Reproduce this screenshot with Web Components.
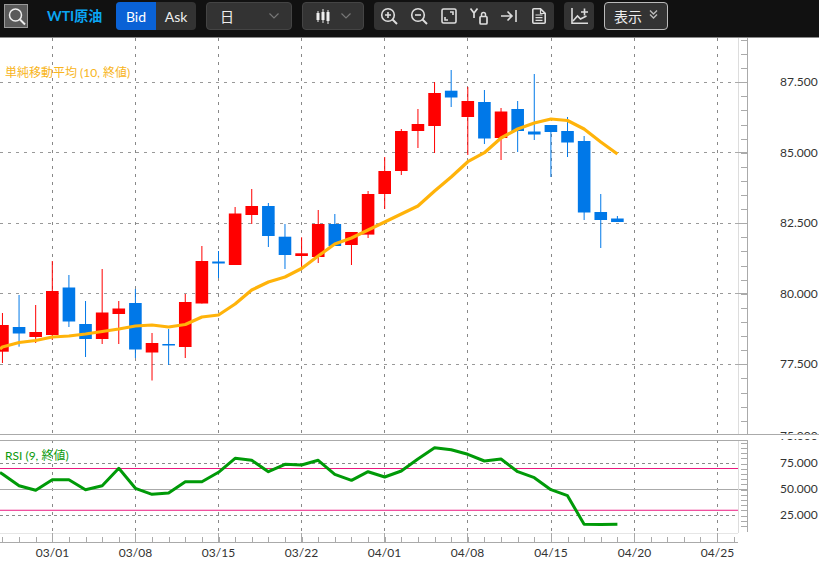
<!DOCTYPE html>
<html><head><meta charset="utf-8">
<style>
html,body{margin:0;padding:0;background:#fff;overflow:hidden}
body{width:819px;height:562px;font-family:Lato,"Noto Sans CJK JP",sans-serif;display:flex;flex-direction:column}
</style></head>
<body>
<chart-toolbar></chart-toolbar>
<chart-canvas></chart-canvas>
<script>
const svgI=(w,h,inner)=>`<svg width="${w}" height="${h}" viewBox="0 0 ${w} ${h}" fill="none" stroke="currentColor" stroke-width="1.6" style="display:block;overflow:visible">${inner}</svg>`;
const ICONS={
 search:svgI(18,18,'<circle cx="8.500" cy="8" r="6" stroke-width="1.500"/><path d="M13 12.500 18 17.500" stroke-width="2"/>'),
 candle:svgI(14,15,'<g stroke-width="1"><path d="M2 2v11M7 0v14M12 1v14"/></g><g fill="currentColor" stroke="none"><rect x=".5" y="4" width="3" height="7"/><rect x="5.500" y="3" width="3" height="8"/><rect x="10.500" y="3" width="3" height="9"/></g>'),
 zoomin:svgI(18,18,'<circle cx="8" cy="8" r="6.300"/><path d="M12.500 12.500 17 17" stroke-width="2"/><path d="M5 8h6M8 5v6"/>'),
 zoomout:svgI(18,18,'<circle cx="8" cy="8" r="6.300"/><path d="M12.500 12.500 17 17" stroke-width="2"/><path d="M5 8h6"/>'),
 fit:svgI(16,16,'<rect x="1" y="1" width="14" height="14" rx="1.500"/><path d="M9 4h3v3M7 12H4V9"/>'),
 ylock:svgI(18,17,'<path d="M.5 .5l3.500 4.500L7.500 .5M4 5v5" stroke-width="1.700"/><rect x="10" y="8.500" width="7" height="7.500" rx="1" stroke-width="1.700"/><path d="M11.500 8V6.500a2 2 0 0 1 4 0V8" stroke-width="1.500"/>'),
 toend:svgI(16,12,'<path d="M0 6h10M6.500 1.500 11 6 6.500 10.500"/><path d="M15 0v12"/>'),
 doc:svgI(14,16,'<path d="M.8 1.800a1 1 0 0 1 1-1h6.700L13.200 5.300V14.200a1 1 0 0 1-1 1H1.800a1 1 0 0 1-1-1z"/><path d="M3.500 7h7M3.500 9.700h7M3.500 12.400h7M8.500 1v4.500H13" stroke-width="1.200"/>'),
 addchart:svgI(17,16,'<path d="M1 0v15.200h16"/><path d="M2 13l4.500-5 3 3L15.500 8"/><path d="M13.500 .5v7M10 4h7"/>'),
 chev:svgI(10,6,'<path d="M.5 .5l4.500 4.500 4.500-4.500" stroke-width="1.200"/>'),
 dbl:svgI(9,9,'<path d="M1 .5l3.500 3.500L8 .5M1 4.500 4.500 8 8 4.500" stroke-width="1.400"/>')
};
class ChartToolbar extends HTMLElement{
 constructor(){super();const s=this.attachShadow({mode:'open'});
 s.innerHTML=`<style>
 :host{display:flex;align-items:flex-start;height:35px;padding:2px 0 0 4px;flex:none;background:#111;border-bottom:1px solid #8a8a8a;color:#eee;font:14px Lato,"Noto Sans CJK JP",sans-serif}
 .sq{width:24px;height:24px;box-sizing:border-box;background:#5a5a5a;border:1px solid #999;display:flex;align-items:center;justify-content:center;color:#eee;margin-top:2px}
 .title{color:#0aa5f2;font-weight:700;font-size:14px;line-height:28px;margin-left:19px;width:55px;white-space:nowrap}
 .seg{display:flex;height:28px;border-radius:4px;overflow:hidden;margin-left:14px;background:#333}
 .seg span{display:flex;align-items:center;justify-content:center;width:40px;font-size:14px}
 .seg .on{background:#0a62d6;color:#fff}
 .dd{height:28px;box-sizing:border-box;background:#333;border:1px solid #444;border-radius:4px;display:flex;align-items:center;margin-left:10px}
 .dd>svg:last-child{color:#777}
 .d1{width:86px;padding:0 12px 0 13px;justify-content:space-between}
 .d2{width:62px;padding:0 12px 0 13px;justify-content:space-between}
 .group{height:28px;background:#333;border-radius:4px;display:flex;align-items:center;margin-left:10px;color:#ddd}
 .g1{width:180px;display:grid;grid-template-columns:repeat(6,30px);justify-items:center}
 .g2{width:30px;justify-content:center}
 .show{height:28px;width:64px;margin-left:10px;box-sizing:border-box;background:#333;border:1px solid #bbb;border-radius:4px;display:flex;align-items:center;justify-content:center;gap:7px;font-size:14px}
 .show svg{color:#bbb;margin-bottom:3px}
 </style>
 <div class="sq">${ICONS.search}</div>
 <div class="title">WTI原油</div>
 <div class="seg"><span class="on">Bid</span><span>Ask</span></div>
 <div class="dd d1"><span>日</span>${ICONS.chev}</div>
 <div class="dd d2">${ICONS.candle}${ICONS.chev}</div>
 <div class="group g1">${ICONS.zoomin}${ICONS.zoomout}${ICONS.fit}${ICONS.ylock}${ICONS.toend}${ICONS.doc}</div>
 <div class="group g2">${ICONS.addchart}</div>
 <div class="show"><span>表示</span>${ICONS.dbl}</div>`;}
}
customElements.define('chart-toolbar',ChartToolbar);

const X=k=>52.3+16.62*k;
const C=[['r',313,363,325,351.7],['b',295,346.700,327,333.500],['r',305,343,332,337],['r',261,340,291,335],['b',275,327,287.500,321.500],['b',301,357,324,339],['r',269,344,312.500,339],['r',301,344,308.500,314],['b',289,358,303,349.500],['r',333,380.500,343,352.500],['b',329,365,344,345.500],['r',294,358,302,347],['r',246,303.500,261,303.500],['b',251,278,261.500,263.500],['r',207,265,213.500,265],['r',189,224,206,215],['b',203,247,206,236],['b',224,269,236.700,255],['r',237.300,267,253.300,256],['r',210,263,224,257],['b',214,246,224,246],['r',232,265,232,245],['r',191,238,194,234.600],['r',157,209,171,194],['r',129,175,131,171],['r',109,148,124,131],['r',82,153,93,126],['b',70,107,90.700,97.500],['r',87,155,101,117],['b',90,144,102,138.500],['r',108,160,111.500,138],['b',101,152,109,131],['b',74,140,131.500,134.500],['b',125,177,125,132],['b',117,157,131,142.500],['b',136,220,141,212.500],['b',194,248,212,220],['b',216,222,218.500,222]];
const MA=[347,342.500,340.500,337,336,334,331.500,329,326,325,327,324.500,317,315,304,290,282,277,268.500,256,244,238,230,222,214,206,191,177,161.700,152.700,138,129,123,119,120.500,129,142,154];
const RSI=[474,485.700,490.300,479.700,479.700,489.700,485.700,468.300,488.300,494.300,493,481.700,481.700,472.300,458.300,460.300,471.700,464.300,465,460.300,474.300,480.300,471.700,477,471,459,447.700,449.700,454.300,461,459,471.700,477.700,489.700,495.700,524.300,524.500,524.300];
class ChartCanvas extends HTMLElement{
 constructor(){super();const s=this.attachShadow({mode:'open'});
 const vg=[52.5,135.5,218.5,301.5,384.5,467.5,551.5,634.5,717.5];
 const hg=[82.5,152.5,223.5,293.5,364.5];
 let g='';
 vg.forEach(x=>{g+=`<path d="M${x} 38V434M${x} 440V533" stroke="#888" stroke-dasharray="3 5"/>`});
 hg.forEach(y=>{g+=`<path d="M0 ${y}H738" stroke="#999" stroke-dasharray="3 5"/>`});
 [463.5,515.5].forEach(y=>{g+=`<path d="M0 ${y}H738" stroke="#888" stroke-dasharray="3 3"/>`});
 g+=`<path d="M0 489.500H747" stroke="#aaa"/>`;
 g+=`<path d="M0 468.500H738" stroke="#ea1a80"/><path d="M0 510.250H738" stroke="#ea1a80"/>`;
 g+=`<path d="M738.500 38V533" stroke="#ddd"/><path d="M747.500 38V434M747.500 440V532" stroke="#aaa"/>`;
 for(let y=40;y<434;y+=14.1){g+=`<path d="M741 ${Math.round(y)+.5}H747" stroke="#aaa"/>`}
 hg.forEach(y=>{g+=`<path d="M735 ${y}H747" stroke="#aaa"/>`});
 for(let i=1;i<=17;i++){const y=Math.round(437.5+i*5.2)+.5;g+=`<path d="M741 ${y}H747" stroke="#aaa"/>`}
 g+=`<path d="M0 533.500H738" stroke="#e6e6e6"/><path d="M0 542.500H738" stroke="#aaa"/>`;
 for(let k=-3;k<=41;k++){const x=Math.round(X(k))+.5;g+=`<path d="M${x} 537V542" stroke="#aaa"/>`}
 vg.forEach(x=>{g+=`<path d="M${x} 533V542" stroke="#aaa"/>`});
 C.forEach((c,i)=>{const k=i-3,x=X(k),col=c[0]=='r'?'#ff0000':'#0078e8';
  g+=`<path d="M${x.toFixed(2)} ${c[1]}V${c[2]}" stroke="${col}" stroke-width="1"/>`;
  g+=`<rect x="${(x-6.3).toFixed(2)}" y="${c[3]}" width="12.600" height="${(c[4]-c[3]).toFixed(1)}" fill="${col}"/>`;});
 const pl=(a)=>a.map((y,i)=>`${X(i-3).toFixed(1)},${y}`).join(' ');
 g+=`<polyline points="0,349 ${pl(MA)}" fill="none" stroke="#ffb30a" stroke-width="3.200" stroke-linejoin="round"/>`;
 g+=`<polyline points="0,472.500 ${pl(RSI)}" fill="none" stroke="#009a08" stroke-width="3" stroke-linejoin="round"/>`;
 g+=`<rect x="0" y="435" width="819" height="5" fill="#fff"/><path d="M0 434.500H819" stroke="#aaa"/><path d="M0 440.500H748" stroke="#aaa"/>`;
 let t='';
 [['87.500',82],['85.000',152.500],['82.500',223],['80.000',293.500],['77.500',364]].forEach(([l,y])=>{t+=`<text x="780" y="${y+4}" class="ax">${l}</text>`});
 [['75.000',463.500],['50.000',489.500],['25.000',515]].forEach(([l,y])=>{t+=`<text x="780" y="${y+3.500}" class="ax">${l}</text>`});
 t+=`<g clip-path="url(#cp)"><text x="780" y="440" class="ax">75.000</text></g>`;
 [['03/01',52.500],['03/08',135.500],['03/15',218.500],['03/22',301.500],['04/01',384.500],['04/08',467.500],['04/15',551],['04/20',634.500],['04/25',717.500]].forEach(([l,x])=>{t+=`<text x="${x}" y="557" text-anchor="middle" class="ax">${l}</text>`});
 t+=`<text x="5" y="77" class="ma">単純移動平均 (10, 終値)</text><text x="5" y="460" class="rs">RSI (9, 終値)</text>`;
 s.innerHTML=`<style>
 :host{display:block;flex:1;position:relative;min-height:0}
 svg{display:block;position:absolute;left:0;top:-38px}
 text{font-family:Lato,"Noto Sans CJK JP",sans-serif}
 .ax{font-size:12px;fill:#333}
 .ma{font-size:12px;fill:#f8b420}
 .rs{font-size:12px;fill:#0c9a0c}
 </style>
 <svg width="819" height="562" viewBox="0 0 819 562"><defs><clipPath id="cp"><rect x="0" y="0" width="819" height="434"/><rect x="0" y="439" width="819" height="3"/></clipPath></defs>${g}${t}</svg>`;}
}
customElements.define('chart-canvas',ChartCanvas);
</script>
</body></html>
